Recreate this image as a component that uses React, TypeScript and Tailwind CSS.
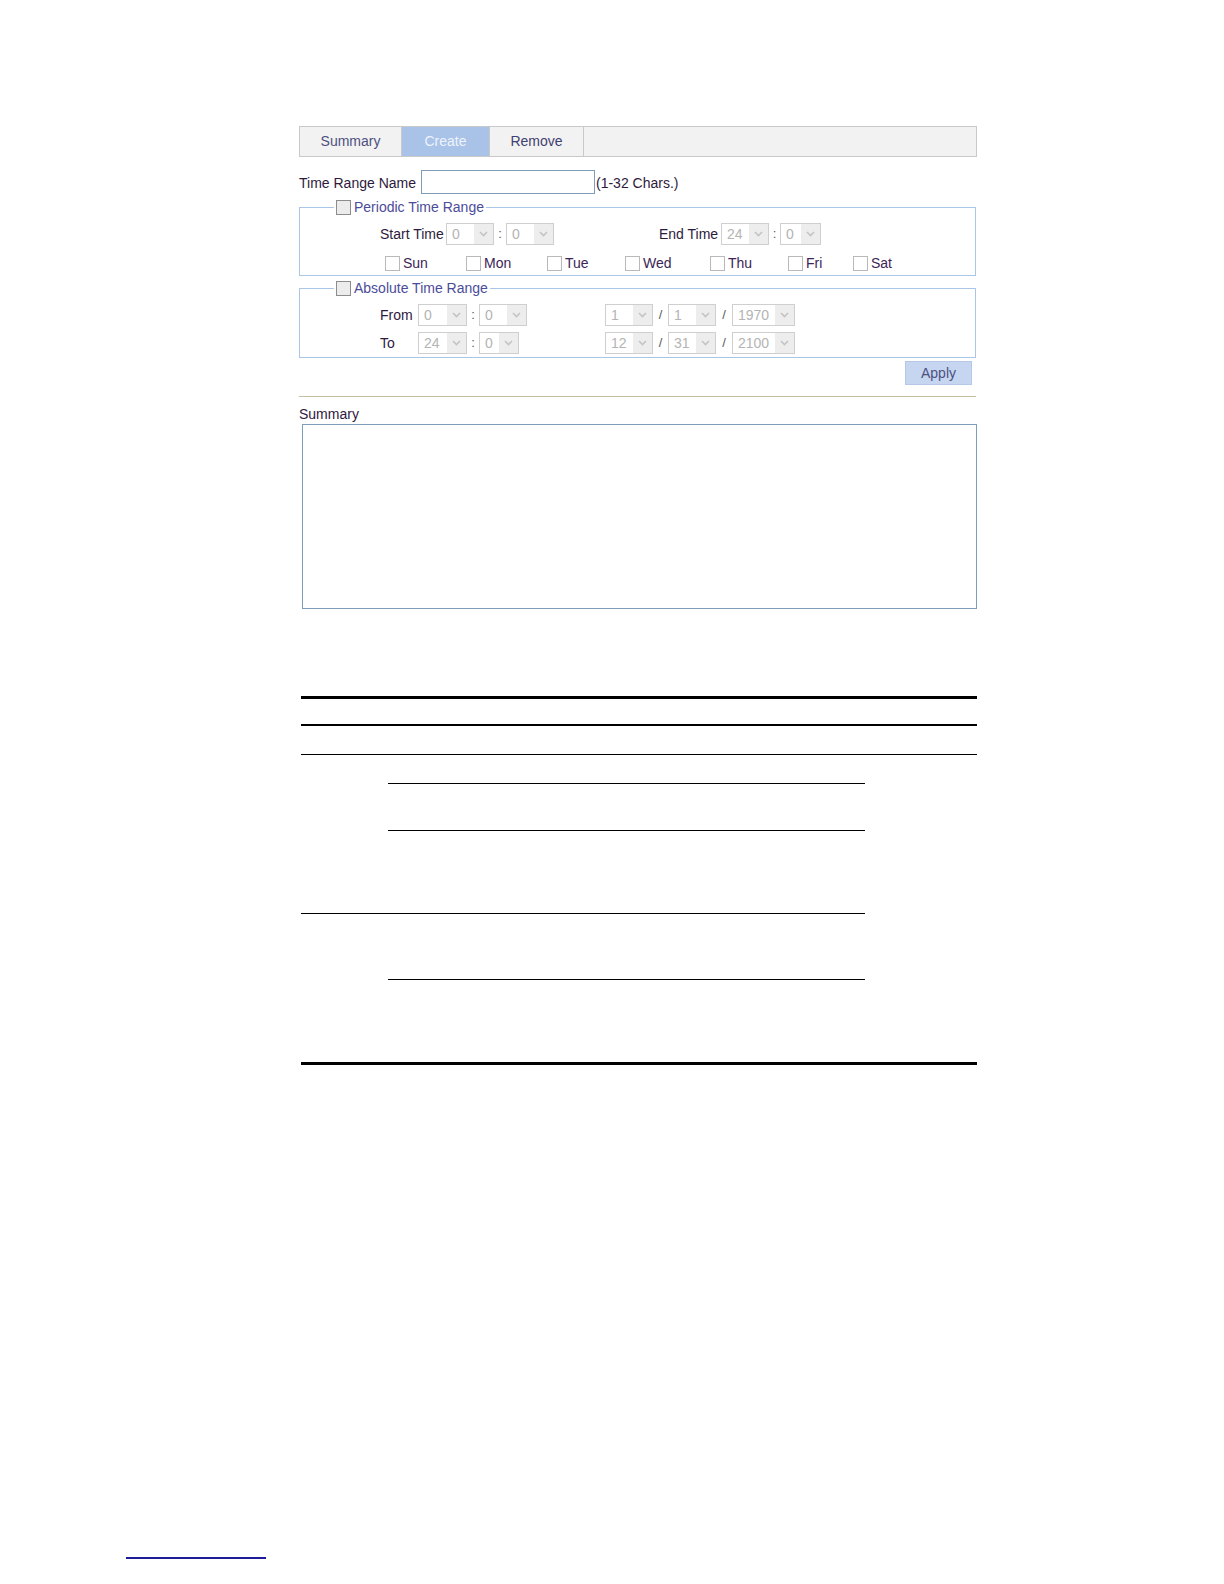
import React from 'react';

const font = { fontFamily: '"Liberation Sans", Arial, sans-serif' };

interface SelectProps {
    value: string;
    width: string;
}

const DisabledSelect: React.FC<SelectProps> = ({ value, width }) => (
    <div className={`${width} h-[22px] flex border border-[#cfcfcf] bg-white shrink-0`}>
        <span className="flex-grow pl-[5px] text-[14px] leading-[20px] text-[#b4b4b4]">{value}</span>
        <span className="w-[19px] h-full bg-[#ededed] flex items-center justify-center">
            <svg width="9" height="6" viewBox="0 0 9 6">
                <path d="M1 1 L4.5 4.5 L8 1" fill="none" stroke="#c4c4c4" strokeWidth="1.6" />
            </svg>
        </span>
    </div>
);

const Box: React.FC<{ strong?: boolean }> = ({ strong }) => (
    <span
        className={`w-[15px] h-[15px] shrink-0 border ${
            strong ? 'border-[#8c8c8c] bg-[#ececec]' : 'border-[#b9b9b9] bg-white'
        }`}
    />
);

const days = [
    { label: 'Sun', w: 'w-[81px]' },
    { label: 'Mon', w: 'w-[81px]' },
    { label: 'Tue', w: 'w-[78px]' },
    { label: 'Wed', w: 'w-[85px]' },
    { label: 'Thu', w: 'w-[78px]' },
    { label: 'Fri', w: 'w-[65px]' },
    { label: 'Sat', w: 'w-[60px]' },
];

const Sep: React.FC<{ char: string; width: string }> = ({ char, width }) => (
    <span className={`${width} text-center text-[13px] text-[#5a5a5a]`}>{char}</span>
);

const App: React.FC = () => {
    return (
        <div className="w-[1224px] h-[1584px] bg-white flex flex-col" style={font}>
            <div className="ml-[299px] w-[678px] pt-[126px] text-[14px] text-[#2e1a3c]">
                {/* tabs */}
                <div className="h-[31px] flex border border-[#c9c9c9] bg-[#f2f2f2]">
                    <div className="w-[102px] flex items-center justify-center text-[#4d5080] border-r border-[#c9c9c9]">
                        Summary
                    </div>
                    <div className="w-[87px] flex items-center justify-center text-[#eef3fb] bg-[#a8c2e8]">Create</div>
                    <div className="w-[95px] flex items-center justify-center text-[#3f4170] border-x border-[#c9c9c9]">
                        Remove
                    </div>
                </div>

                {/* name */}
                <div className="mt-[13px] h-[24px] flex items-center">
                    <span className="w-[122px] pt-[2px]">Time Range Name</span>
                    <span className="w-[174px] h-[24px] border border-[#7f9db9] bg-white" />
                    <span className="ml-[1px] pt-[2px]">(1-32 Chars.)</span>
                </div>

                {/* periodic */}
                <fieldset className="mt-[5px] w-[677px] border border-[#a9c6e6] px-0 pb-[3px]">
                    <legend className="ml-[34px] px-[2px] h-[16px] flex items-center gap-[3px] text-[#4c4c99]">
                        <Box strong />
                        <span>Periodic Time Range</span>
                    </legend>
                    <div className="pt-[8px] pl-[80px] h-[30px] flex items-center">
                        <span className="w-[66px]">Start Time</span>
                        <DisabledSelect value="0" width="w-[48px]" />
                        <Sep char=":" width="w-[12px]" />
                        <DisabledSelect value="0" width="w-[48px]" />
                        <span className="ml-[105px] w-[62px]">End Time</span>
                        <DisabledSelect value="24" width="w-[48px]" />
                        <Sep char=":" width="w-[11px]" />
                        <DisabledSelect value="0" width="w-[41px]" />
                    </div>
                    <div className="mt-[9px] pl-[85px] h-[18px] flex items-center">
                        {days.map(d => (
                            <div key={d.label} className={`${d.w} flex items-center gap-[3px] text-[#3d2457]`}>
                                <Box />
                                <span>{d.label}</span>
                            </div>
                        ))}
                    </div>
                </fieldset>

                {/* absolute */}
                <fieldset className="mt-[4px] w-[677px] border border-[#a9c6e6] px-0 pb-[3px]">
                    <legend className="ml-[34px] px-[2px] h-[16px] flex items-center gap-[3px] text-[#4c4c99]">
                        <Box strong />
                        <span>Absolute Time Range</span>
                    </legend>
                    <div className="pt-[8px] pl-[80px] h-[30px] flex items-center">
                        <span className="w-[38px]">From</span>
                        <DisabledSelect value="0" width="w-[49px]" />
                        <Sep char=":" width="w-[12px]" />
                        <DisabledSelect value="0" width="w-[48px]" />
                        <span className="w-[78px]" />
                        <DisabledSelect value="1" width="w-[48px]" />
                        <Sep char="/" width="w-[15px]" />
                        <DisabledSelect value="1" width="w-[48px]" />
                        <Sep char="/" width="w-[16px]" />
                        <DisabledSelect value="1970" width="w-[63px]" />
                    </div>
                    <div className="mt-[6px] pl-[80px] h-[22px] flex items-center">
                        <span className="w-[38px]">To</span>
                        <DisabledSelect value="24" width="w-[49px]" />
                        <Sep char=":" width="w-[12px]" />
                        <DisabledSelect value="0" width="w-[40px]" />
                        <span className="w-[86px]" />
                        <DisabledSelect value="12" width="w-[48px]" />
                        <Sep char="/" width="w-[15px]" />
                        <DisabledSelect value="31" width="w-[48px]" />
                        <Sep char="/" width="w-[16px]" />
                        <DisabledSelect value="2100" width="w-[63px]" />
                    </div>
                </fieldset>

                <div className="w-[677px] flex justify-end pr-[4px] mt-[3px]">
                    <button className="w-[67px] h-[24px] bg-[#c6d6f0] border border-[#b5c8e8] text-[#4d5080] text-[14px]">
                        Apply
                    </button>
                </div>

                <div className="mt-[11px] w-[677px] border-t border-[#c3bfa3]" />

                <div className="mt-[9px] leading-[16px]">Summary</div>
                <div className="mt-[2px] ml-[3px] w-[675px] h-[185px] border border-[#7f9db9] bg-white" />
            </div>

            {/* table */}
            <div className="ml-[301px] mt-[87px] w-[676px] border-t-[3px] border-b-[3px] border-black">
                <div className="h-[27px] border-b-2 border-black" />
                <div className="h-[29px] border-b border-black" />
                <div className="flex">
                    <div className="w-[564px] flex flex-col">
                        <div className="flex border-b border-black">
                            <div className="w-[87px]" />
                            <div className="flex-grow flex flex-col">
                                <div className="h-[29px] border-b border-black" />
                                <div className="h-[47px] border-b border-black" />
                                <div className="h-[82px]" />
                            </div>
                        </div>
                        <div className="flex">
                            <div className="w-[87px]" />
                            <div className="flex-grow flex flex-col">
                                <div className="h-[66px] border-b border-black" />
                                <div className="h-[82px]" />
                            </div>
                        </div>
                    </div>
                    <div className="flex-grow" />
                </div>
            </div>

            {/* footer link underline */}
            <div className="ml-[126px] mt-[492px] w-[140px] border-t-[2px] border-[#1c1c9a]" />
        </div>
    );
};

export default App;
